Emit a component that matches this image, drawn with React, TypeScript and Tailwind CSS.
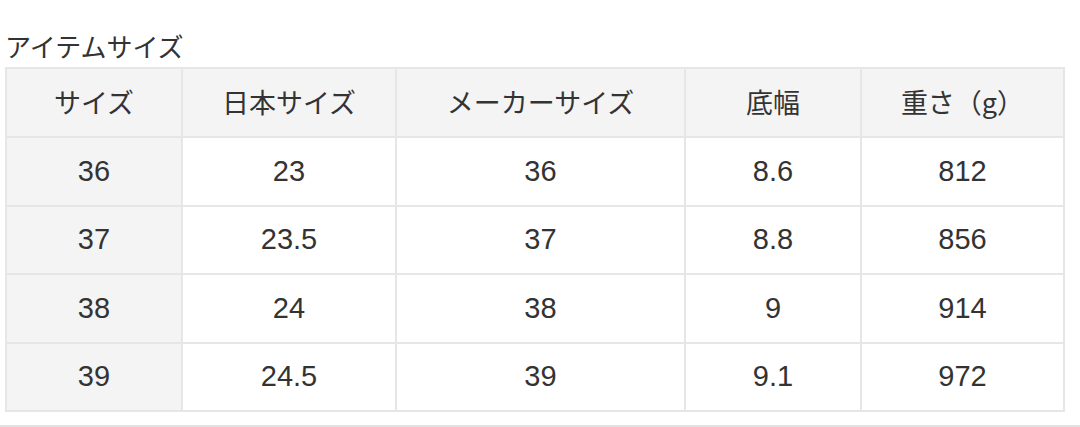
const headers = ['サイズ', '日本サイズ', 'メーカーサイズ', '底幅', '重さ（g）'];

const rows = [
  ['36', '23', '36', '8.6', '812'],
  ['37', '23.5', '37', '8.8', '856'],
  ['38', '24', '38', '9', '914'],
  ['39', '24.5', '39', '9.1', '972'],
];

const widths = ['w-[176px]', 'w-[214px]', 'w-[289px]', 'w-[176px]', 'w-[203px]'];

export default function App() {
  return (
    <div
      className="w-[1080px] h-[427px] bg-white text-[#333] overflow-hidden"
      style={{ fontFamily: '"Noto Sans CJK JP", "Noto Sans", sans-serif' }}
    >
      <div className="pl-[5px] pt-[29px]">
        <h2 className="text-[26px] leading-[34px] font-normal h-[38px]">アイテムサイズ</h2>
        <table className="border-collapse table-fixed w-[1058px] text-[27px]">
          <thead>
            <tr className="h-[69px] bg-[#f4f4f4]">
              {headers.map((h, i) => (
                <th key={h} className={`${widths[i]} border-2 border-[#e6e6e6] font-normal text-center`}>
                  {h}
                </th>
              ))}
            </tr>
          </thead>
          <tbody>
            {rows.map(r => (
              <tr key={r[0]} className="h-[68.5px]">
                {r.map((c, i) => (
                  <td
                    key={i}
                    className={`border-2 border-[#e6e6e6] text-center text-[29px] ${i === 0 ? 'bg-[#f4f4f4]' : 'bg-white'}`}
                    style={{ fontFamily: '"Liberation Sans", Arial, sans-serif' }}
                  >
                    {c}
                  </td>
                ))}
              </tr>
            ))}
          </tbody>
        </table>
      </div>
      <div className="mt-[13px] h-[2px] bg-[#e2e2e2]" />
    </div>
  );
}
